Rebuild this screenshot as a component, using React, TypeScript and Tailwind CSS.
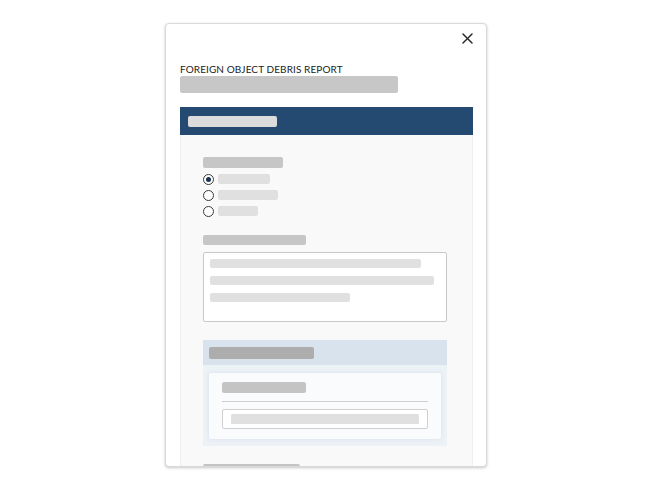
import React from 'react';

function Bar({ w, h, c, className = '' }: { w: number; h: number; c: string; className?: string }) {
  return <div className={`shrink-0 rounded-[2px] ${className}`} style={{ width: w, height: h, backgroundColor: c }} />;
}

function Radio({ checked, labelWidth }: { checked?: boolean; labelWidth: number }) {
  return (
    <div className="flex h-[16px] items-center gap-[4px]">
      <span className="flex h-[11px] w-[11px] items-center justify-center rounded-full border border-[#3a3a3a] bg-white">
        {checked && <span className="h-[5px] w-[5px] rounded-full bg-[#1b3150]" />}
      </span>
      <Bar w={labelWidth} h={10} c="#e0e0e0" />
    </div>
  );
}

export default function App() {
  return (
    <div className="flex h-[490px] w-full items-center justify-center bg-white pr-[1px]" style={{ fontFamily: 'Lato, "Open Sans", sans-serif' }}>
      <div className="h-[444px] w-[322px] overflow-hidden rounded-[4px] border border-[#d9d9d9] bg-white pl-[14px] pr-[13px] shadow-[0_1px_3px_rgba(0,0,0,0.22)]">
        <div className="flex justify-end pt-[9px]">
          <button className="flex h-[11px] w-[11px] items-center justify-center">
            <svg width="11" height="11" viewBox="0 0 11 11" fill="none" stroke="#2b2b2b" strokeWidth="1.5" strokeLinecap="round">
              <path d="M1 1L10 10M10 1L1 10" />
            </svg>
          </button>
        </div>

        <h1 className="mt-[19px] text-[10px] leading-[12px] font-normal tracking-[0.01em] text-[#1c1c1c]">
          FOREIGN OBJECT DEBRIS REPORT
        </h1>
        <Bar w={218} h={17} c="#c7c7c7" className="mt-[1px]" />

        <div className="mt-[14px] flex h-[28px] items-center bg-[#244a71] pl-[8px]">
          <Bar w={89} h={11} c="#dcdcdc" />
        </div>

        <div className="min-h-[340px] border-x border-[#efefef] bg-[#f9f9f9] pl-[22px] pr-[25px] pt-[22px]">
          <Bar w={80} h={11} c="#c6c6c6" />
          <div className="mt-[3px] flex flex-col">
            <Radio checked labelWidth={52} />
            <Radio labelWidth={60} />
            <Radio labelWidth={40} />
          </div>

          <Bar w={103} h={10} c="#c6c6c6" className="mt-[16px]" />
          <div className="mt-[7px] flex h-[70px] flex-col gap-[8px] rounded-[2px] border border-[#c9c9c9] bg-white px-[6px] pt-[6px]">
            <Bar w={211} h={9} c="#e0e0e0" />
            <Bar w={224} h={9} c="#e0e0e0" />
            <Bar w={140} h={9} c="#e0e0e0" />
          </div>

          <div className="mt-[18px]">
            <div className="flex h-[25px] items-center bg-[#d9e3ed] pl-[6px]">
              <Bar w={105} h={12} c="#adadad" />
            </div>
            <div className="bg-[#edf2f7] px-[6px] pb-[7px] pt-[8px]">
              <div className="rounded-[2px] bg-[#fafbfc] px-[13px] pb-[10px] pt-[9px] shadow-[0_0_4px_rgba(210,222,235,0.9)]">
                <Bar w={84} h={11} c="#c4c4c4" />
                <div className="mt-[8px] h-px bg-[#cfcfcf]" />
                <div className="mt-[7px] flex h-[20px] items-center rounded-[2px] border border-[#cfcfcf] bg-white px-[8px]">
                  <div className="h-[10px] flex-1 rounded-[1px] bg-[#e0e0e0]" />
                </div>
              </div>
            </div>
          </div>

          <Bar w={97} h={11} c="#c4c4c4" className="mt-[18px]" />
        </div>
      </div>
    </div>
  );
}
